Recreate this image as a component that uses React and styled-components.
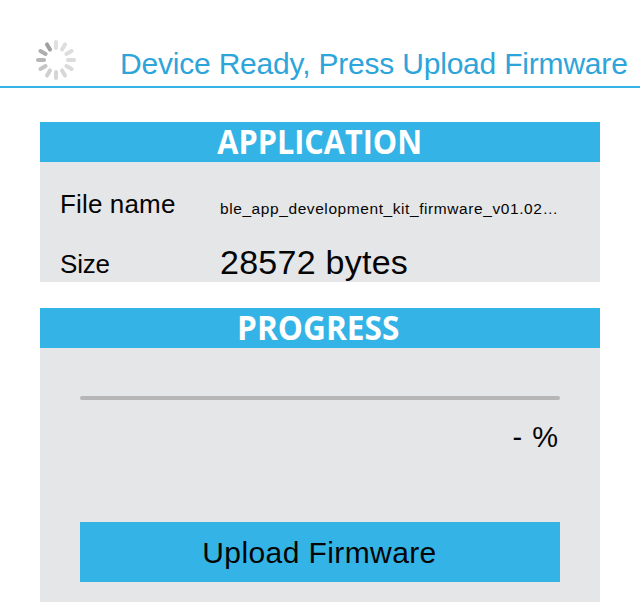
import React from "react";
import styled, { createGlobalStyle } from "styled-components";

const GlobalStyle = createGlobalStyle`
  * { box-sizing: border-box; }
  body {
    margin: 0;
    background: #fff;
    color: #050505;
    font-family: "Liberation Sans", Arial, sans-serif;
    overflow: hidden;
  }
`;

const Screen = styled.main`
  display: flex;
  flex-direction: column;
  width: 640px;
  height: 602px;
  overflow: hidden;
`;

const StatusBar = styled.header`
  display: flex;
  flex: none;
  height: 88px;
  padding-left: 36px;
  border-bottom: 2px solid #34b4e6;
`;

const Spinner = styled.svg`
  flex: none;
  width: 40px;
  height: 40px;
  margin-top: 40px;
`;

const Status = styled.h1`
  margin: 46px 0 0 44px;
  font-size: 30px;
  line-height: 36px;
  font-weight: 400;
  letter-spacing: -0.2px;
  white-space: nowrap;
  color: #2da5da;
`;

const Panel = styled.section`
  flex: none;
  width: 560px;
  height: ${(p) => p.$height}px;
  margin: ${(p) => p.$gap}px 40px 0;
  background: #e5e6e8;
`;

const PanelTitle = styled.h2`
  display: flex;
  justify-content: center;
  height: 40px;
  margin: 0;
  padding-right: ${(p) => p.$nudge || 0}px;
  background: #34b4e6;
  color: #fff;
  font-family: "Open Sans", "Noto Sans", sans-serif;
  font-size: 34px;
  font-weight: 700;
  line-height: 39px;
`;

const TitleText = styled.span`
  transform: scaleX(${(p) => p.$condense});
`;

const Details = styled.dl`
  display: grid;
  grid-template-columns: 160px 1fr;
  grid-template-rows: 60px 60px;
  margin: 0;
  padding-left: 20px;
`;

const Label = styled.dt`
  padding-top: 27px;
  font-size: 26px;
  line-height: 30px;
  letter-spacing: ${(p) => p.$spacing}px;
`;

const FileName = styled.dd`
  margin: 0;
  padding-top: 37px;
  font-size: 15.5px;
  line-height: 20px;
  letter-spacing: 0.58px;
  white-space: nowrap;
`;

const Size = styled.dd`
  margin: 0;
  padding-top: 20px;
  font-size: 34px;
  line-height: 40px;
  letter-spacing: 0.26px;
  white-space: nowrap;
`;

const Transfer = styled.div`
  display: flex;
  flex-direction: column;
  padding: 48px 40px 0;
`;

const Track = styled.div`
  height: 4px;
  border-radius: 2px;
  background: #b6b6b6;
`;

const Percent = styled.div`
  height: 32px;
  margin-top: 21px;
  padding-right: 1px;
  font-size: 29px;
  line-height: 32px;
  letter-spacing: 1px;
  text-align: right;
`;

const UploadButton = styled.button`
  height: 60px;
  margin-top: 69px;
  padding: 2px 1px 0 0;
  border: 0;
  background: #34b4e6;
  color: #050505;
  font-family: inherit;
  font-size: 30px;
  line-height: 36px;
  letter-spacing: 0.4px;
`;

const spokes = [
  "#dfdfdf", "#dedede", "#dddddd", "#dcdcdc", "#dadada", "#d8d8d8",
  "#d5d5d5", "#d0d0d0", "#c5c5c5", "#b7b7b7", "#aeaeae", "#9f9f9f",
];

export default function App() {
  return (
    <>
      <GlobalStyle />
      <Screen>
        <StatusBar>
          <Spinner viewBox="0 0 40 40" aria-label="Loading">
            {spokes.map((color, i) => (
              <rect
                key={i}
                x="18"
                y="0"
                width="4"
                height="10"
                rx="2"
                fill={color}
                transform={`rotate(${i * 30} 20 20)`}
              />
            ))}
          </Spinner>
          <Status>Device Ready, Press Upload Firmware</Status>
        </StatusBar>
        <Panel $height={160} $gap={34}>
          <PanelTitle>
            <TitleText $condense={0.9}>APPLICATION</TitleText>
          </PanelTitle>
          <Details>
            <Label $spacing={0.15}>File name</Label>
            <FileName>ble_app_development_kit_firmware_v01.02…</FileName>
            <Label $spacing={-0.2}>Size</Label>
            <Size>28572 bytes</Size>
          </Details>
        </Panel>
        <Panel $height={294} $gap={26}>
          <PanelTitle $nudge={3}>
            <TitleText $condense={0.93}>PROGRESS</TitleText>
          </PanelTitle>
          <Transfer>
            <Track />
            <Percent>- %</Percent>
            <UploadButton>Upload Firmware</UploadButton>
          </Transfer>
        </Panel>
      </Screen>
    </>
  );
}
